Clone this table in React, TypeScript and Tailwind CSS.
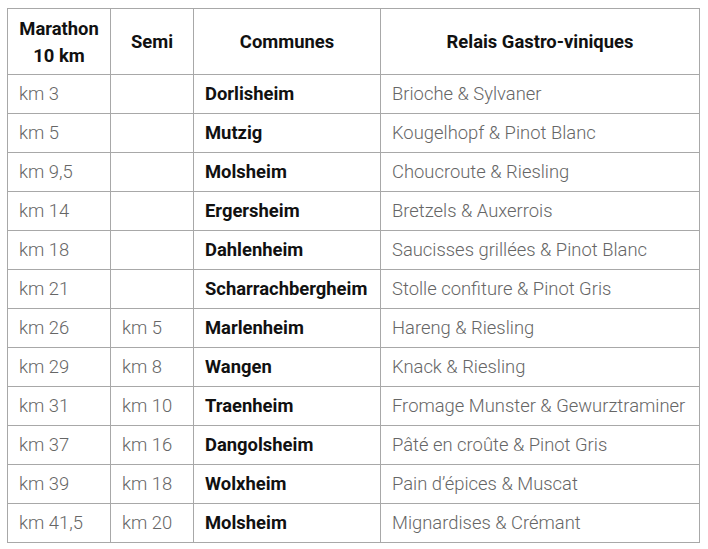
const rows: [string, string, string, string][] = [
  ["km 3", "", "Dorlisheim", "Brioche & Sylvaner"],
  ["km 5", "", "Mutzig", "Kougelhopf & Pinot Blanc"],
  ["km 9,5", "", "Molsheim", "Choucroute & Riesling"],
  ["km 14", "", "Ergersheim", "Bretzels & Auxerrois"],
  ["km 18", "", "Dahlenheim", "Saucisses grillées & Pinot Blanc"],
  ["km 21", "", "Scharrachbergheim", "Stolle confiture & Pinot Gris"],
  ["km 26", "km 5", "Marlenheim", "Hareng & Riesling"],
  ["km 29", "km 8", "Wangen", "Knack & Riesling"],
  ["km 31", "km 10", "Traenheim", "Fromage Munster & Gewurztraminer"],
  ["km 37", "km 16", "Dangolsheim", "Pâté en croûte & Pinot Gris"],
  ["km 39", "km 18", "Wolxheim", "Pain d’épices & Muscat"],
  ["km 41,5", "km 20", "Molsheim", "Mignardises & Crémant"],
];

export default function App() {
  return (
    <div className="min-h-screen bg-white pl-[7px] pt-[8px] font-['Roboto',sans-serif]">
      <table className="table-fixed border-collapse w-[692px] text-[18.4px]">
        <colgroup>
          <col className="w-[103px]" />
          <col className="w-[83px]" />
          <col className="w-[187px]" />
          <col className="w-[319px]" />
        </colgroup>
        <thead>
          <tr className="h-[66px]">
            {["Marathon 10 km", "Semi", "Communes", "Relais Gastro-viniques"].map((h) => (
              <th
                key={h}
                className="border border-[#a8a8a8] px-[11px] text-center font-bold text-[#111] leading-[27px]"
              >
                {h}
              </th>
            ))}
          </tr>
        </thead>
        <tbody>
          {rows.map((r, i) => (
            <tr key={i} className="h-[39px]">
              <td className="border border-[#a8a8a8] px-[11px] font-light text-[#666]">{r[0]}</td>
              <td className="border border-[#a8a8a8] px-[11px] font-light text-[#666]">{r[1]}</td>
              <td className="border border-[#a8a8a8] px-[11px] font-bold text-[#111] whitespace-nowrap">{r[2]}</td>
              <td className="border border-[#a8a8a8] px-[11px] font-light text-[#666] whitespace-nowrap">{r[3]}</td>
            </tr>
          ))}
        </tbody>
      </table>
    </div>
  );
}
